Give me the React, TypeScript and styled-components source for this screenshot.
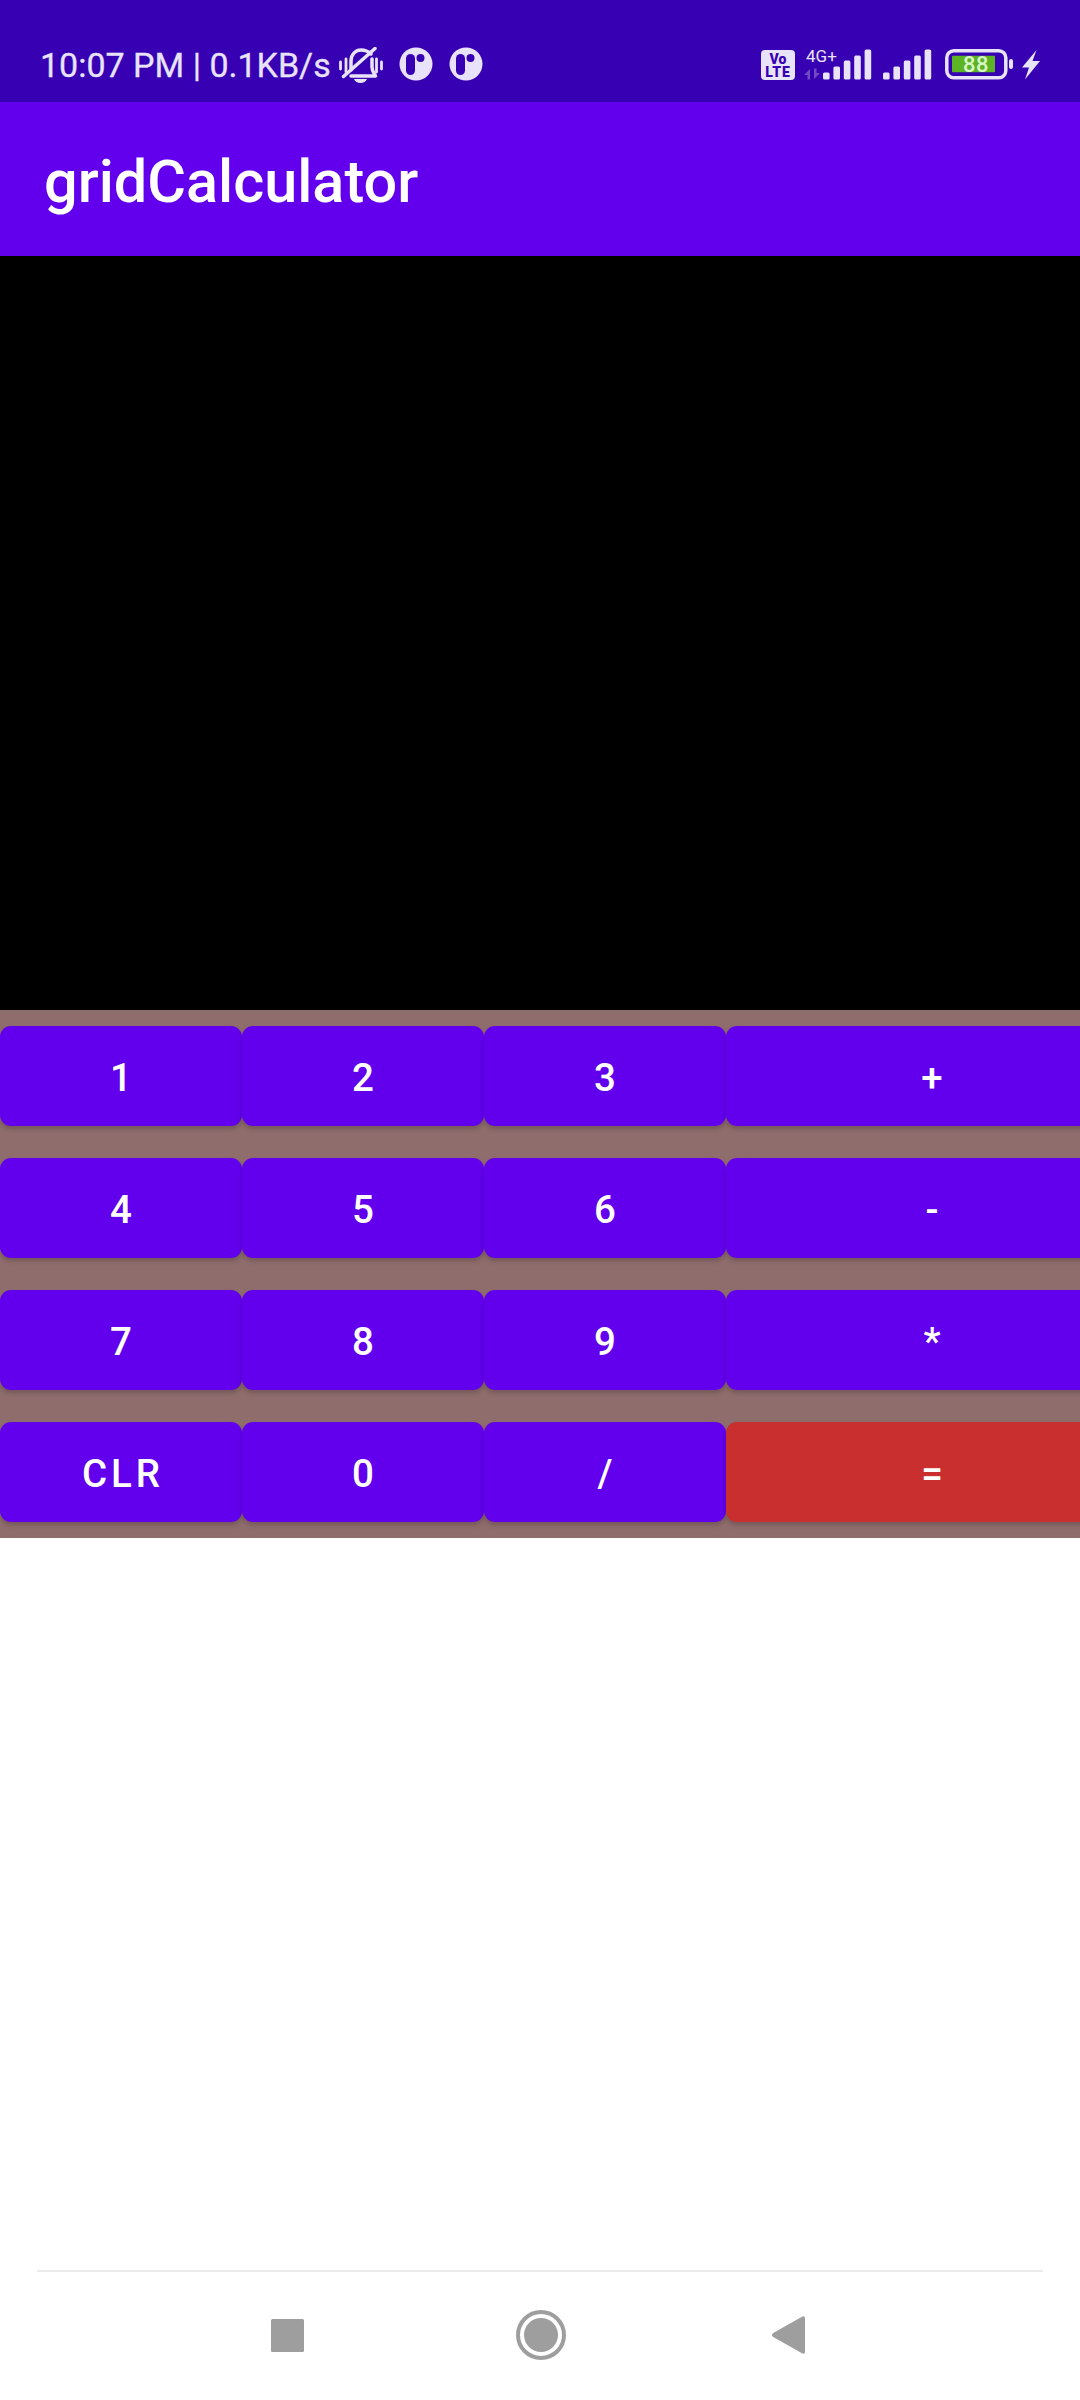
import React from 'react';
import styled, {createGlobalStyle} from 'styled-components';

const GlobalStyle = createGlobalStyle`
  html, body {
    margin: 0;
    padding: 0;
    background: #fff;
  }
  * {
    box-sizing: border-box;
  }
`;

const Screen = styled.div`
  width: 1080px;
  height: 2400px;
  display: flex;
  flex-direction: column;
  overflow: hidden;
  font-family: Roboto, "Liberation Sans", sans-serif;
  background: #fff;
`;

const StatusBar = styled.div`
  height: 102px;
  flex: none;
  display: flex;
  align-items: flex-start;
  justify-content: space-between;
  padding: 47px 40px 0 40px;
  background: #3700b3;
  color: #e9e3f9;
`;

const StatusGroup = styled.div`
  display: flex;
  align-items: flex-start;
`;

const Clock = styled.span`
  font-size: 34px;
  line-height: 36px;
  letter-spacing: 0;
  white-space: nowrap;
  margin-right: 8px;
  -webkit-text-stroke: 0.3px #e9e3f9;
`;

const Toolbar = styled.div`
  height: 154px;
  flex: none;
  display: flex;
  align-items: center;
  padding: 5px 0 0 44px;
  background: #6200ee;
`;

const Title = styled.h1`
  margin: 0;
  color: #fff;
  font-size: 59.4px;
  font-weight: 500;
  line-height: 64px;
`;

const Display = styled.div`
  height: 754px;
  flex: none;
  background: #000;
`;

const Keypad = styled.div`
  flex: none;
  display: grid;
  grid-template-columns: 242px 242px 242px 412px;
  grid-auto-rows: 132px;
  width: 1080px;
  overflow: hidden;
  background: #906d6d;
`;

const Key = styled.button<{$danger?: boolean}>`
  margin: 16px 0;
  height: 100px;
  border: 0;
  padding: 3px 0 0 4px;
  border-radius: 11px;
  background: ${(props) => (props.$danger ? '#c92f2f' : '#6200ee')};
  color: #fff;
  font-family: inherit;
  font-size: 38.5px;
  font-weight: 500;
  letter-spacing: 4px;
  box-shadow: 0 3px 5px rgba(0, 0, 0, 0.2);
`;

const Blank = styled.div`
  flex: 1;
  background: #fff;
`;

const NavBar = styled.div`
  height: 130px;
  flex: none;
  margin: 0 37px;
  border-top: 2px solid #ebebeb;
  display: flex;
  align-items: center;
  padding: 0 0 2px 234px;
`;

const NavIcon = styled.svg<{$gap?: number}>`
  display: block;
  flex: none;
  margin-right: ${(props) => props.$gap || 0}px;
  fill: #9e9e9e;
`;

const keys = ['1', '2', '3', '+', '4', '5', '6', '-', '7', '8', '9', '*', 'CLR', '0', '/', '='];

const SilentBell = () => (
  <svg width="44" height="36" viewBox="0 0 44 36" style={{marginRight: 16}}>
    <g fill="none" stroke="#e9e3f9" strokeWidth="3.500" strokeLinecap="round" strokeLinejoin="round">
      <path d="M1.500 15v7M7 12v13M37.500 12v13M42.500 15v7" strokeWidth="2.800" />
      <path d="M12 23V14C12 7 17 3 22 3c4 0 7 1 10 4M33 12v8c0 4 2 6 3.500 9H12" />
      <path d="M4.500 29.500L36 1.500" />
    </g>
    <path d="M15 32h13c-1 2.500-3.500 4-6.500 4S16 34.500 15 32z" fill="#e9e3f9" />
  </svg>
);

const PillBadge = ({gap}: {gap?: number}) => (
  <svg width="34" height="34" viewBox="0 0 34 34" style={{marginRight: gap || 0}}>
    <circle cx="17" cy="17" r="16.500" fill="#e9e3f9" />
    <rect x="7" y="7" width="9" height="21" rx="4.500" fill="#3700b3" />
    <circle cx="21.500" cy="11" r="4" fill="#3700b3" />
  </svg>
);

const Bars = ({gap}: {gap?: number}) => (
  <svg width="49" height="31" viewBox="0 0 49 31" style={{marginRight: gap || 0, marginTop: 2}}>
    {[7, 13, 19, 24, 30].map((h, i) => (
      <rect key={i} x={i * 10.4} y={30.5 - h} width="6.600" height={h} rx="1.500" fill="#e9e3f9" />
    ))}
  </svg>
);

const VoLte = () => (
  <svg width="34" height="30" viewBox="0 0 34 30" style={{marginRight: 11, marginTop: 3}}>
    <rect width="34" height="30" rx="4" fill="#e9e3f9" />
    <text x="17" y="13.500" textAnchor="middle" fontSize="14" fontWeight="900" fontFamily="Roboto, sans-serif" fill="#3700b3">Vo</text>
    <text x="17" y="26.500" textAnchor="middle" fontSize="14" fontWeight="900" letterSpacing="0.800" fontFamily="Roboto, sans-serif" fill="#3700b3">LTE</text>
  </svg>
);

const NetworkTag = styled.div`
  width: 17px;
  height: 33px;
  position: relative;
`;

const NetworkLabel = styled.span`
  position: absolute;
  left: 0;
  top: 0;
  font-size: 17px;
  line-height: 18px;
  white-space: nowrap;
`;

const DataArrows = () => (
  <svg width="16" height="12" viewBox="0 0 16 12" style={{position: 'absolute', left: -2, top: 21}}>
    <path d="M0 7l6-6v10.500H3.500V7zM16 5l-6 6V.500h2.500V5z" fill="#6f4cc4" />
  </svg>
);

const Battery = () => (
  <svg width="70" height="32" viewBox="0 0 70 32" style={{marginRight: 7, marginTop: 2}}>
    <rect x="1.800" y="1.800" width="59" height="27" rx="7" fill="none" stroke="#e9e3f9" strokeWidth="3.500" />
    <rect x="7" y="6.700" width="43" height="16.600" rx="1" fill="#5cb424" />
    <rect x="64" y="10" width="4" height="10" rx="2" fill="#e9e3f9" />
    <text x="31" y="23" textAnchor="middle" fontSize="22" fontWeight="500" letterSpacing="0.500" fontFamily="Roboto, sans-serif" fill="#d9f6c9">88</text>
  </svg>
);

const Bolt = () => (
  <svg width="18" height="30" viewBox="0 0 18 30" style={{marginTop: 3}}>
    <path d="M14.500 0L0 17.500h7L3 29.500 18 11h-7.500z" fill="#e9e3f9" />
  </svg>
);

const App = () => {
  return (
    <Screen>
      <GlobalStyle />
      <StatusBar>
        <StatusGroup>
          <Clock>10:07 PM | 0.1KB/s</Clock>
          <SilentBell />
          <PillBadge gap={16} />
          <PillBadge />
        </StatusGroup>
        <StatusGroup>
          <VoLte />
          <NetworkTag>
            <NetworkLabel>4G+</NetworkLabel>
            <DataArrows />
          </NetworkTag>
          <Bars gap={11} />
          <Bars gap={13} />
          <Battery />
          <Bolt />
        </StatusGroup>
      </StatusBar>
      <Toolbar>
        <Title>gridCalculator</Title>
      </Toolbar>
      <Display />
      <Keypad>
        {keys.map((label) => (
          <Key key={label} $danger={label === '='}>{label}</Key>
        ))}
      </Keypad>
      <Blank />
      <NavBar>
        <NavIcon $gap={212} width="33" height="33" viewBox="0 0 33 33">
          <rect width="33" height="33" rx="1.500" />
        </NavIcon>
        <NavIcon $gap={206} width="50" height="50" viewBox="0 0 50 50">
          <circle cx="25" cy="25" r="23" fill="none" stroke="#9e9e9e" strokeWidth="4" />
          <circle cx="25" cy="25" r="17" />
        </NavIcon>
        <NavIcon width="33" height="38" viewBox="0 0 33 38">
          <path d="M30 .8c1.500-1 3-.3 3 1.500v33.400c0 1.800-1.500 2.500-3 1.500L1.200 21c-1.600-1.100-1.600-2.900 0-4z" />
        </NavIcon>
      </NavBar>
    </Screen>
  );
};

export default App;
